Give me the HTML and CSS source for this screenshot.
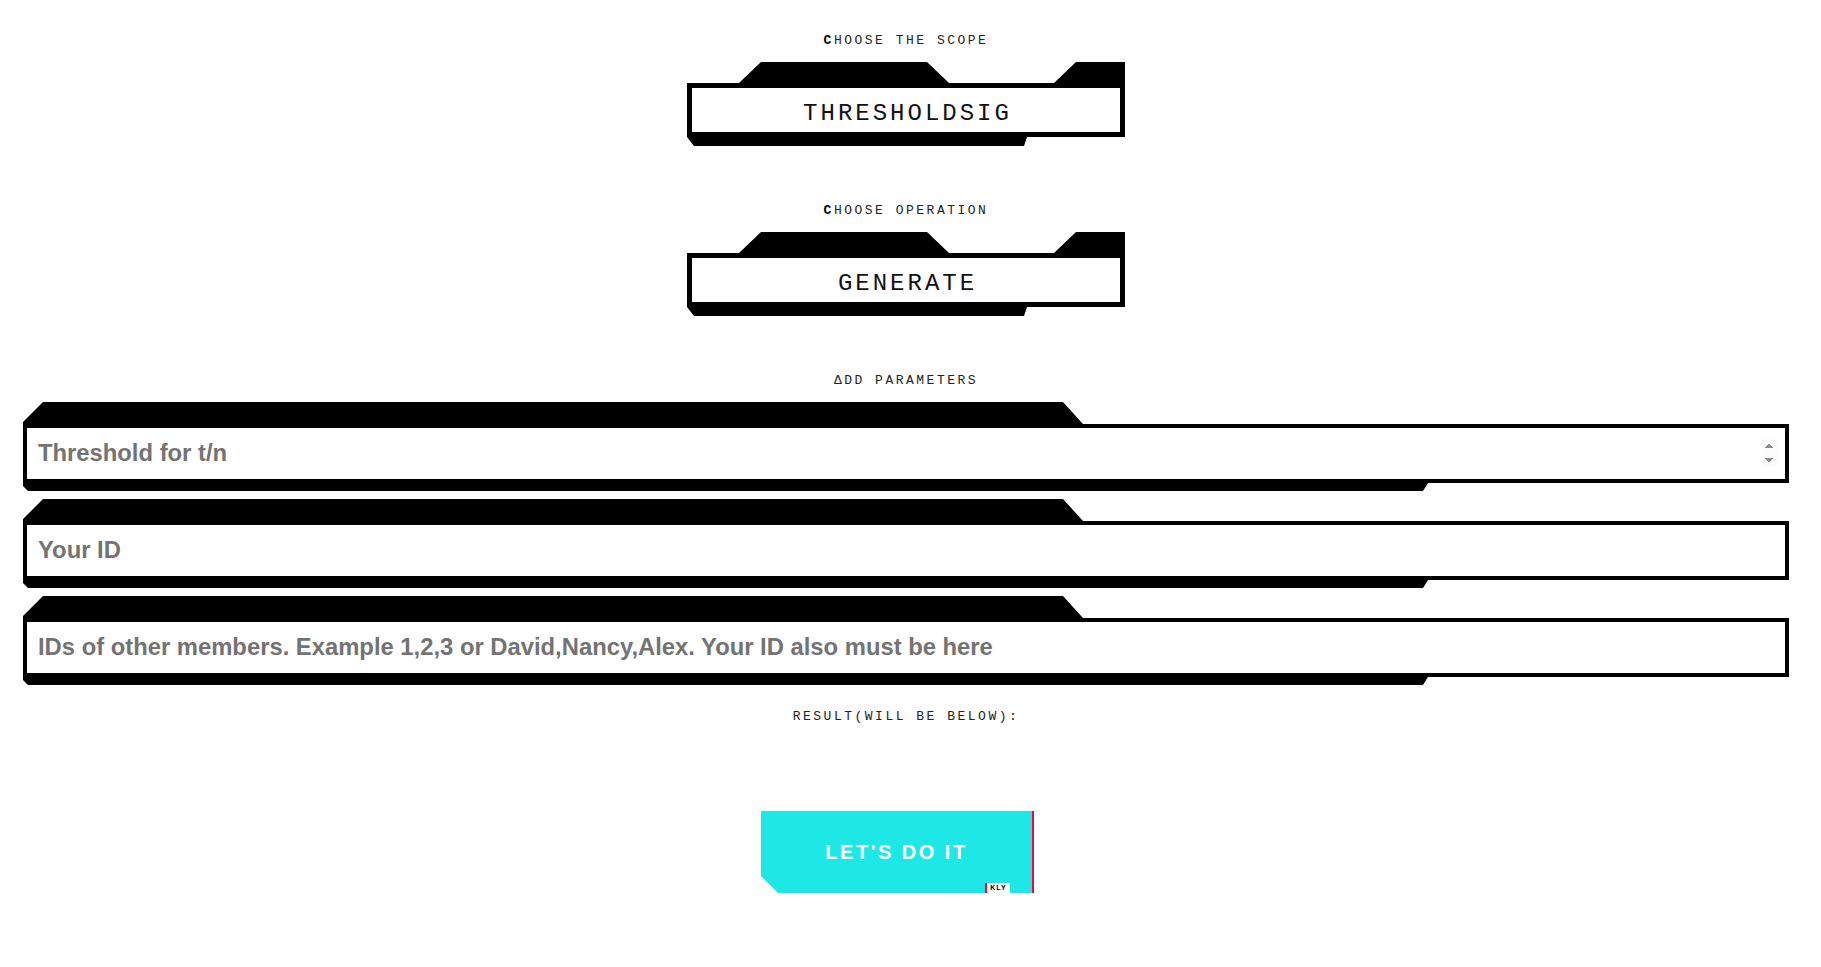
FILE: index.html
```html
<!DOCTYPE html>
<html lang="en">
<head>
<meta charset="utf-8">
<title>ThresholdSig</title>
<link rel="stylesheet" href="styles.css">
</head>
<body>
<main class="page">
  <label class="caption caption-first first-cap" for="scope">CHOOSE THE SCOPE</label>
  <div class="sel-frame">
    <select id="scope" class="sel">
      <option>THRESHOLDSIG</option>
    </select>
  </div>

  <label class="caption caption-mid first-cap" for="operation">CHOOSE OPERATION</label>
  <div class="sel-frame">
    <select id="operation" class="sel">
      <option>GENERATE</option>
    </select>
  </div>

  <div class="caption caption-mid">ΔDD PARAMETERS</div>
  <div class="fields">
    <div class="field">
      <input class="field-input" type="number" placeholder="Threshold for t/n" autofocus>
    </div>
    <div class="field">
      <input class="field-input" type="text" placeholder="Your ID">
    </div>
    <div class="field">
      <input class="field-input" type="text" placeholder="IDs of other members. Example 1,2,3 or David,Nancy,Alex. Your ID also must be here">
    </div>
  </div>

  <div class="caption caption-result">RESULT(WILL BE BELOW):</div>

  <button class="cta" type="button">LET'S DO IT<span class="cta-tag">KLY</span></button>
</main>
</body>
</html>
```

FILE: styles.css
```css
* {
  box-sizing: border-box;
}

html, body {
  margin: 0;
  padding: 0;
  background: #ffffff;
}

body {
  font-family: "Liberation Sans", Arial, sans-serif;
  color: #000;
}

.page {
  width: 1766px;
  margin-left: 23px;
  padding-top: 33px;
  display: flex;
  flex-direction: column;
  align-items: center;
}

.caption {
  display: block;
  font-family: "Liberation Mono", "DejaVu Sans Mono", monospace;
  font-size: 13px;
  line-height: 16px;
  height: 16px;
  letter-spacing: 2.5px;
  color: #222;
  text-align: center;
  white-space: nowrap;
}

.first-cap::first-letter {
  font-weight: bold;
  color: #000;
}

.caption-first {
  margin-bottom: 13px;
}

.caption-mid {
  margin-top: 57px;
  margin-bottom: 13px;
}

.caption-result {
  margin-top: 24px;
  margin-bottom: 86px;
}

/* ---- select frames ---- */
.sel-frame {
  width: 438px;
  height: 84px;
  padding: 26px 5px 14px 5px;
  background: #000;
  clip-path: polygon(
    0 21px, 52px 21px, 74px 0, 240px 0, 262px 21px,
    367px 21px, 389px 0, 100% 0, 100% 75px,
    340px 75px, 337px 100%, 7px 100%, 0 calc(100% - 9px)
  );
}

.sel {
  display: block;
  width: 100%;
  height: 44px;
  margin: 0;
  padding: 6px 0 0 3px;
  border: 0;
  border-radius: 0;
  outline: none;
  background: #fff;
  -webkit-appearance: none;
  appearance: none;
  font-family: "Liberation Mono", "DejaVu Sans Mono", monospace;
  font-size: 24px;
  letter-spacing: 3px;
  color: #111;
  text-align: center;
  text-align-last: center;
}

/* ---- parameter fields ---- */
.fields {
  align-self: stretch;
  display: flex;
  flex-direction: column;
  gap: 8px;
}

.field {
  height: 89px;
  padding: 26px 4px 12px 4px;
  background: #000;
  clip-path: polygon(
    0 20px, 20px 0, 1040px 0, 1060px 22px, 100% 22px,
    100% 81px, 1405px 81px, 1400px 100%, 5px 100%, 0 calc(100% - 5px)
  );
}

.field-input {
  display: block;
  width: 100%;
  height: 51px;
  margin: 0;
  padding: 0 8px 1px 11px;
  border: 0;
  border-radius: 0;
  outline: none;
  background: #fff;
  font-family: "Liberation Sans", Arial, sans-serif;
  font-weight: bold;
  font-size: 23.8px;
  color: #000;
}

.field-input::placeholder {
  color: #737373;
  opacity: 1;
}

.field-input::-webkit-inner-spin-button {
  opacity: 1;
}

/* ---- call to action ---- */
.cta {
  position: relative;
  width: 273px;
  height: 82px;
  margin: 0 17px 0 0;
  padding: 0;
  border: 0;
  border-right: 2px solid #ff003c;
  background: #1ee8e6;
  color: #fff;
  font-family: "Liberation Sans", Arial, sans-serif;
  font-weight: bold;
  font-size: 20px;
  letter-spacing: 2.5px;
  cursor: pointer;
  clip-path: polygon(0 0, 100% 0, 100% 100%, 17px 100%, 0 calc(100% - 17px));
}

.cta-tag {
  position: absolute;
  right: 22px;
  bottom: 0;
  width: 25px;
  height: 10px;
  background: #fff;
  border-left: 2px solid #ff003c;
  color: #000;
  font-family: "Liberation Sans", Arial, sans-serif;
  font-weight: bold;
  font-size: 7px;
  line-height: 10px;
  letter-spacing: 1px;
  text-align: center;
}
```
